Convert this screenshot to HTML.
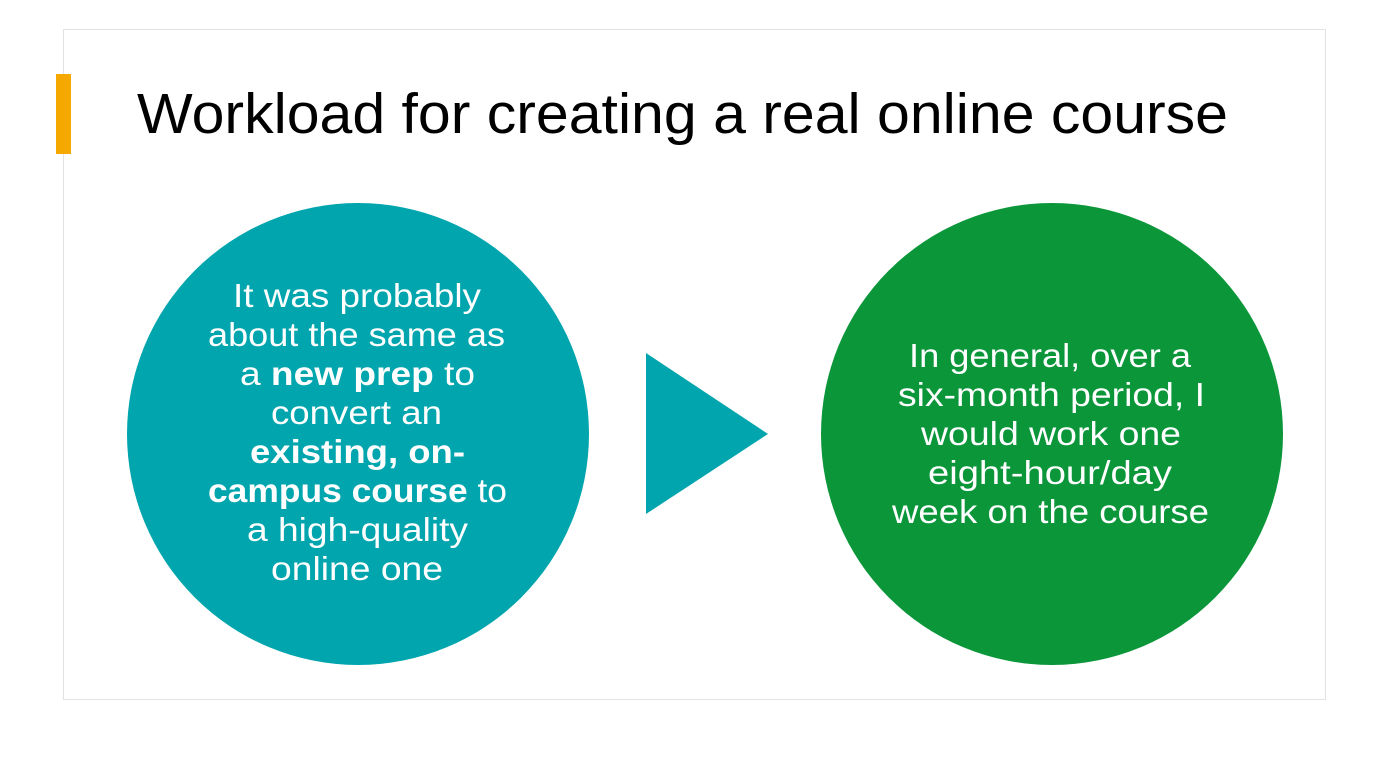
<!DOCTYPE html>
<html><head><style>
html,body{margin:0;padding:0;background:#fff;width:1378px;height:775px;overflow:hidden}
</style></head><body>
<svg width="1378" height="775" viewBox="0 0 1378 775" xmlns="http://www.w3.org/2000/svg" font-family="Liberation Sans, sans-serif">
<rect x="63.5" y="29.5" width="1262" height="670" fill="#fff" stroke="#e2e2e2"/>
<rect x="56" y="74" width="15" height="80" fill="#F5A800"/>
<text x="137" y="133" font-size="57" fill="#000" textLength="1091" lengthAdjust="spacingAndGlyphs">Workload for creating a real online course</text>
<circle cx="358" cy="434" r="231" fill="#00A5AE"/>
<polygon points="646,353 768,434 646,514" fill="#00A5AE"/>
<circle cx="1052" cy="434" r="231" fill="#0A9639"/>
<g fill="#fff" font-size="33">
<text x="233" y="307" textLength="248" lengthAdjust="spacingAndGlyphs">It was probably</text>
<text x="208" y="346" textLength="297" lengthAdjust="spacingAndGlyphs">about the same as</text>
<text x="240" y="385" textLength="235" lengthAdjust="spacingAndGlyphs">a <tspan font-weight="bold">new prep</tspan> to</text>
<text x="271" y="424" textLength="171" lengthAdjust="spacingAndGlyphs">convert an</text>
<text x="250" y="463" textLength="215" lengthAdjust="spacingAndGlyphs" font-weight="bold">existing, on-</text>
<text x="208" y="502" textLength="299" lengthAdjust="spacingAndGlyphs"><tspan font-weight="bold">campus course</tspan> to</text>
<text x="247" y="541" textLength="221" lengthAdjust="spacingAndGlyphs">a high-quality</text>
<text x="271" y="580" textLength="172" lengthAdjust="spacingAndGlyphs">online one</text>
<text x="909" y="367" textLength="282" lengthAdjust="spacingAndGlyphs">In general, over a</text>
<text x="898" y="406" textLength="307" lengthAdjust="spacingAndGlyphs">six-month period, I</text>
<text x="921" y="445" textLength="260" lengthAdjust="spacingAndGlyphs">would work one</text>
<text x="928" y="484" textLength="244" lengthAdjust="spacingAndGlyphs">eight-hour/day</text>
<text x="892" y="523" textLength="317" lengthAdjust="spacingAndGlyphs">week on the course</text>
</g>
</svg>
</body></html>
